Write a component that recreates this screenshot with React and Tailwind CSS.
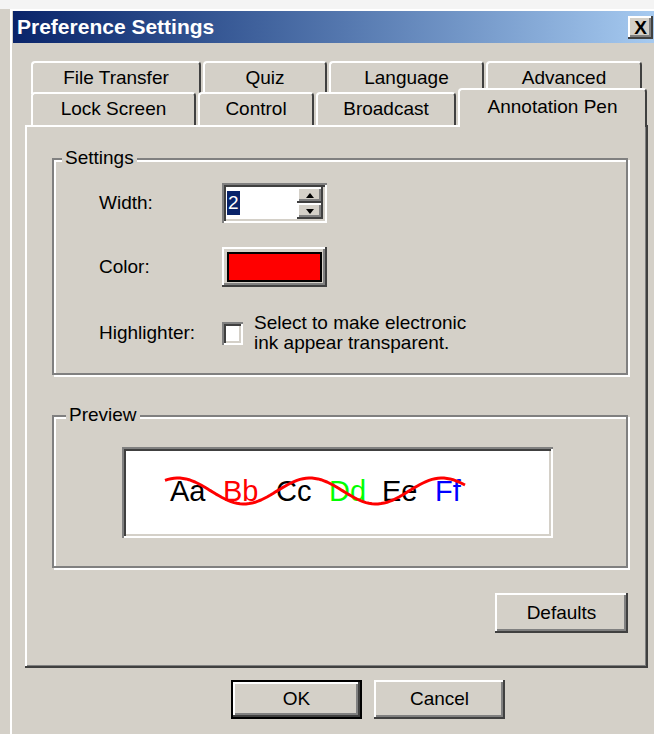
import React from "react";

// classic 3D bevels
const raised =
  "shadow-[inset_-2px_-2px_0_#404040,inset_2px_2px_0_#ffffff,inset_-4px_-4px_0_#808080]";
const sunken =
  "shadow-[inset_2px_2px_0_#808080,inset_-2px_-2px_0_#ffffff,inset_4px_4px_0_#404040,inset_-4px_-4px_0_#d4d0c8]";
const etched = "border-2 border-[#808080] shadow-[inset_2px_2px_0_#ffffff,2px_2px_0_#ffffff]";

const topTabs = [
  { label: "File Transfer", w: "w-[170px]" },
  { label: "Quiz", w: "w-[124px]" },
  { label: "Language", w: "w-[155px]" },
  { label: "Advanced", w: "w-[156px]" },
];

const bottomTabs = [
  { label: "Lock Screen", w: "w-[165px]" },
  { label: "Control", w: "w-[116px]" },
  { label: "Broadcast", w: "w-[140px]" },
];

const sample = [
  { text: "Aa", color: "text-black" },
  { text: "Bb", color: "text-[#ff0000]" },
  { text: "Cc", color: "text-black" },
  { text: "Dd", color: "text-[#00ff00]" },
  { text: "Ee", color: "text-black" },
  { text: "Ff", color: "text-[#0000ff]" },
];

// red ink stroke drawn across the sample letters
const wavePath = () => {
  const pts = [];
  for (let x = 43; x <= 345; x += 3) {
    const y = 44 - 13 * Math.cos((2 * Math.PI * (x - 56)) / 132);
    pts.push(`${x},${y.toFixed(1)}`);
  }
  return "M" + pts.join(" L");
};

const Tab = ({ label, w }) => (
  <div
    className={`${w} flex h-[33px] items-center justify-center rounded-t-[4px] border-l-2 border-t-2 border-r-2 border-l-white border-t-white border-r-[#404040] bg-[#d4d0c8] text-[19px]`}
  >
    {label}
  </div>
);

const Button = ({ label, isDefault }) => (
  <div className={isDefault ? "border-2 border-black" : ""}>
    <div
      className={`flex items-center justify-center bg-[#d4d0c8] text-[19px] ${raised} ${
        isDefault ? "h-[35px] w-[127px]" : "h-[39px] w-[131px]"
      }`}
    >
      {label}
    </div>
  </div>
);

const Arrow = ({ up }) => (
  <svg width="8" height="5" viewBox="0 0 8 5">
    {up ? <polygon points="4,0 8,5 0,5" fill="#000" /> : <polygon points="0,0 8,0 4,5" fill="#000" />}
  </svg>
);

export default function App() {
  return (
    <div className="h-[734px] w-[654px] overflow-hidden bg-[#d4d0c8] font-['Liberation_Sans',Arial,sans-serif] text-black">
      <div className="h-[9px] bg-[#f4f4f4]" />
      <div className="ml-[10px] h-[725px] border-l-2 border-t-2 border-white pl-[1px]">
        {/* title bar */}
        <div className="flex h-[32px] items-center justify-between bg-gradient-to-r from-[#0a246a] to-[#a6caf0] pl-[4px] pr-[1px]">
          <span className="text-[21px] font-bold text-white">Preference Settings</span>
          <div
            className={`flex h-[23px] w-[25px] items-center justify-center bg-[#d4d0c8] text-[19px] font-bold leading-none ${raised}`}
          >
            X
          </div>
        </div>

        <div className="pl-[12px] pt-[18px]">
          {/* tab strip */}
          <div className="flex gap-[2px] pl-[6px]">
            {topTabs.map((t) => (
              <Tab key={t.label} label={t.label} w={t.w} />
            ))}
          </div>
          <div className="-mt-[2px] flex h-[33px] items-end gap-[2px] pl-[6px]">
            {bottomTabs.map((t) => (
              <Tab key={t.label} label={t.label} w={t.w} />
            ))}
            <div className="relative z-10 -mb-[2px] flex h-[39px] w-[189px] items-center justify-center rounded-t-[4px] border-l-2 border-t-2 border-r-2 border-l-white border-t-white border-r-[#404040] bg-[#d4d0c8] pb-[3px] text-[19px]">
              Annotation Pen
            </div>
          </div>

          {/* tab page */}
          <div
            className={`h-[543px] w-[623px] bg-[#d4d0c8] pl-[27px] pt-[33px] shadow-[inset_-2px_-2px_0_#404040,inset_2px_2px_0_#ffffff,inset_-3px_-3px_0_#808080]`}
          >
            <div className={`relative h-[217px] w-[576px] ${etched}`}>
              <span className="absolute -top-[13px] left-[8px] bg-[#d4d0c8] px-[3px] text-[19px] leading-[22px]">
                Settings
              </span>
              <div className="flex flex-col pl-[45px] pt-[23px]">
                <div className="flex h-[40px] items-center">
                  <span className="w-[123px] text-[19px]">Width:</span>
                  <div className={`flex h-[40px] w-[105px] bg-white p-[4px] ${sunken}`}>
                    <div className="flex flex-1 items-center pl-[1px]">
                      <span className="bg-[#0a246a] px-[1px] text-[19px] leading-[24px] text-white">2</span>
                    </div>
                    <div className="flex w-[26px] flex-col">
                      <div className={`flex h-[16px] items-center justify-center bg-[#d4d0c8] ${raised}`}>
                        <Arrow up />
                      </div>
                      <div className={`flex h-[16px] items-center justify-center bg-[#d4d0c8] ${raised}`}>
                        <Arrow />
                      </div>
                    </div>
                  </div>
                </div>

                <div className="mt-[24px] flex h-[40px] items-center">
                  <span className="w-[123px] text-[19px]">Color:</span>
                  <div className={`h-[40px] w-[105px] bg-[#d4d0c8] p-[5px] ${raised}`}>
                    <div className="h-full w-full border-2 border-black bg-[#ff0000]" />
                  </div>
                </div>

                <div className="mt-[26px] flex h-[40px] items-center">
                  <span className="w-[123px] text-[19px]">Highlighter:</span>
                  <div className={`h-[23px] w-[21px] bg-white ${sunken}`} />
                  <div className="ml-[11px] text-[19px] leading-[20px]">
                    <div>Select to make electronic</div>
                    <div>ink appear transparent.</div>
                  </div>
                </div>
              </div>
            </div>

            <div className={`relative mt-[40px] h-[153px] w-[576px] ${etched}`}>
              <span className="absolute -top-[13px] left-[12px] bg-[#d4d0c8] px-[3px] text-[19px] leading-[22px]">
                Preview
              </span>
              <div className="pl-[68px] pt-[30px]">
                <div className={`relative h-[91px] w-[431px] bg-white pl-[48px] pt-[28px] ${sunken}`}>
                  <div className="flex text-[29px] leading-[32px]">
                    {sample.map((s) => (
                      <span key={s.text} className={`w-[53px] ${s.color}`}>
                        {s.text}
                      </span>
                    ))}
                  </div>
                  <svg className="absolute left-0 top-0" width="431" height="91" viewBox="0 0 431 91">
                    <path d={wavePath()} fill="none" stroke="#ff0000" strokeWidth="3" strokeLinejoin="round" />
                  </svg>
                </div>
              </div>
            </div>

            <div className="mt-[25px] flex w-[576px] justify-end">
              <div className={`flex h-[40px] w-[133px] items-center justify-center bg-[#d4d0c8] text-[19px] ${raised}`}>
                Defaults
              </div>
            </div>
          </div>

          {/* dialog buttons */}
          <div className="mt-[12px] flex gap-[12px] pl-[206px]">
            <Button label="OK" isDefault />
            <Button label="Cancel" />
          </div>
        </div>
      </div>
    </div>
  );
}
